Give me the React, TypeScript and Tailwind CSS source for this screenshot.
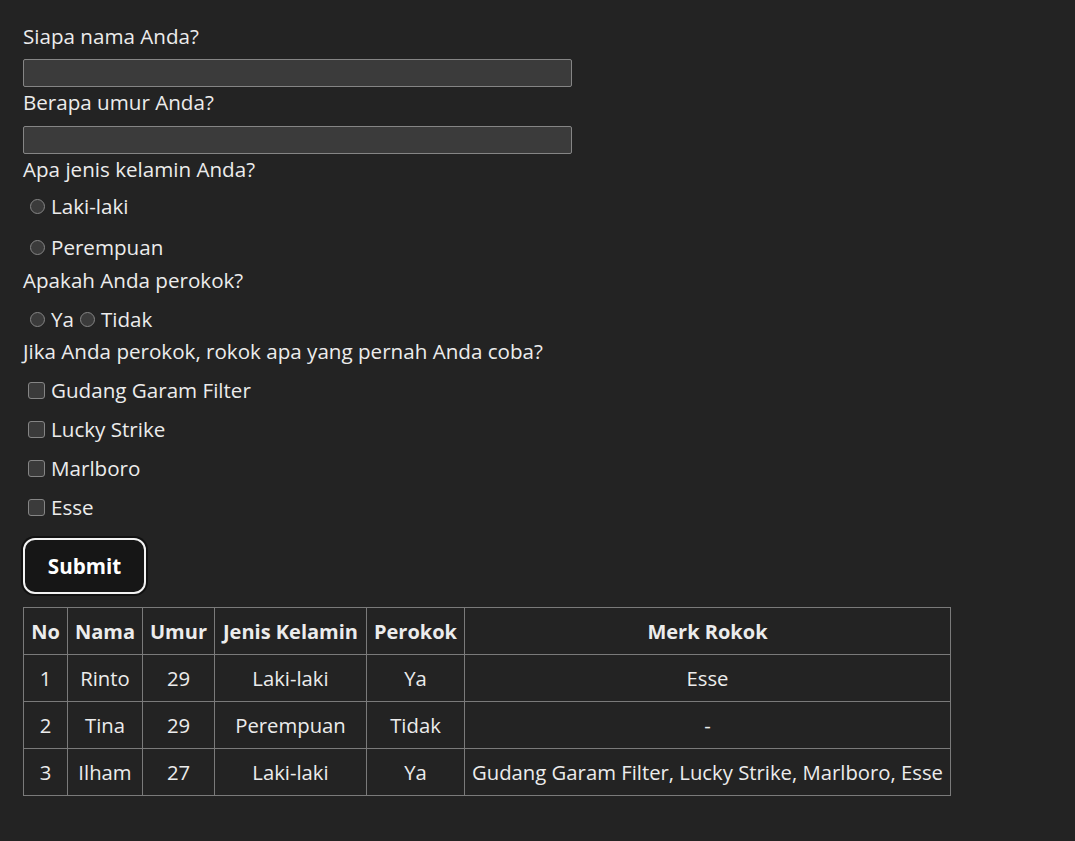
import { useState } from "react";

const rows = [
  { no: 1, nama: "Rinto", umur: 29, jk: "Laki-laki", perokok: "Ya", merk: "Esse" },
  { no: 2, nama: "Tina", umur: 29, jk: "Perempuan", perokok: "Tidak", merk: "-" },
  { no: 3, nama: "Ilham", umur: 27, jk: "Laki-laki", perokok: "Ya", merk: "Gudang Garam Filter, Lucky Strike, Marlboro, Esse" },
];

const merkList = ["Gudang Garam Filter", "Lucky Strike", "Marlboro", "Esse"];

function Radio({ name, className = "" }: { name: string; className?: string }) {
  return (
    <input
      type="radio"
      name={name}
      className={`h-[15px] w-[15px] shrink-0 appearance-none rounded-full border border-[#858585] bg-[#3b3b3b] ${className}`}
    />
  );
}

function Check() {
  return (
    <input
      type="checkbox"
      className="ml-[5px] mr-[6px] h-[17px] w-[17px] shrink-0 appearance-none rounded-[3px] border border-[#858585] bg-[#3b3b3b]"
    />
  );
}

export default function App() {
  const [nama, setNama] = useState("");
  const [umur, setUmur] = useState("");

  return (
    <div className="min-h-screen bg-[#232323] px-[23px] pt-[23px] font-['Segoe_UI','Open_Sans',sans-serif] text-[20.6px] leading-[27px] text-[#ececec]">
      <form className="flex flex-col items-start" onSubmit={(e) => e.preventDefault()}>
        <label className="h-[27px]">Siapa nama Anda?</label>
        <input
          value={nama}
          onChange={(e) => setNama(e.target.value)}
          className="mt-[9px] h-[28px] w-[549px] rounded-[2px] border border-[#858585] bg-[#3b3b3b] px-1 outline-none"
        />
        <label className="mt-[2px] h-[27px]">Berapa umur Anda?</label>
        <input
          value={umur}
          onChange={(e) => setUmur(e.target.value)}
          className="mt-[10px] h-[28px] w-[549px] rounded-[2px] border border-[#858585] bg-[#3b3b3b] px-1 outline-none"
        />
        <label className="mt-[2px] h-[27px]">Apa jenis kelamin Anda?</label>
        <label className="mt-[10px] flex h-[27px] items-center">
          <Radio name="jk" className="ml-[7px] mr-[6px]" />
          Laki-laki
        </label>
        <label className="mt-[14px] flex h-[27px] items-center">
          <Radio name="jk" className="ml-[7px] mr-[6px]" />
          Perempuan
        </label>
        <label className="mt-[6px] h-[27px]">Apakah Anda perokok?</label>
        <div className="mt-[12px] flex h-[27px] items-center">
          <Radio name="rokok" className="ml-[7px] mr-[6px]" />
          <span>Ya</span>
          <Radio name="rokok" className="ml-[6px] mr-[6px]" />
          <span>Tidak</span>
        </div>
        <label className="mt-[5px] h-[27px]">Jika Anda perokok, rokok apa yang pernah Anda coba?</label>
        {merkList.map((m) => (
          <label key={m} className="mt-[12px] flex h-[27px] items-center">
            <Check />
            {m}
          </label>
        ))}
        <button
          type="submit"
          className="mt-[17px] h-[56px] w-[123px] rounded-[12px] border-2 border-[#f2f2f2] bg-[#161616] font-bold text-white shadow-[0_0_0_2px_#111]"
        >
          Submit
        </button>
      </form>

      <table className="mt-[13px] w-[927px] table-fixed border-collapse text-center text-[20.3px]">
        <colgroup>
          <col className="w-[44px]" />
          <col className="w-[75px]" />
          <col className="w-[72px]" />
          <col className="w-[152px]" />
          <col className="w-[98px]" />
          <col className="w-[486px]" />
        </colgroup>
        <thead>
          <tr className="h-[47px]">
            {["No", "Nama", "Umur", "Jenis Kelamin", "Perokok", "Merk Rokok"].map((h) => (
              <th key={h} className="whitespace-nowrap border border-[#7a7a7a] p-0 text-[20px] font-bold">
                {h}
              </th>
            ))}
          </tr>
        </thead>
        <tbody>
          {rows.map((r) => (
            <tr key={r.no} className="h-[47px]">
              <td className="border border-[#7a7a7a] p-0">{r.no}</td>
              <td className="border border-[#7a7a7a] p-0">{r.nama}</td>
              <td className="border border-[#7a7a7a] p-0">{r.umur}</td>
              <td className="whitespace-nowrap border border-[#7a7a7a] p-0">{r.jk}</td>
              <td className="border border-[#7a7a7a] p-0">{r.perokok}</td>
              <td className="whitespace-nowrap border border-[#7a7a7a] p-0">{r.merk}</td>
            </tr>
          ))}
        </tbody>
      </table>
    </div>
  );
}
